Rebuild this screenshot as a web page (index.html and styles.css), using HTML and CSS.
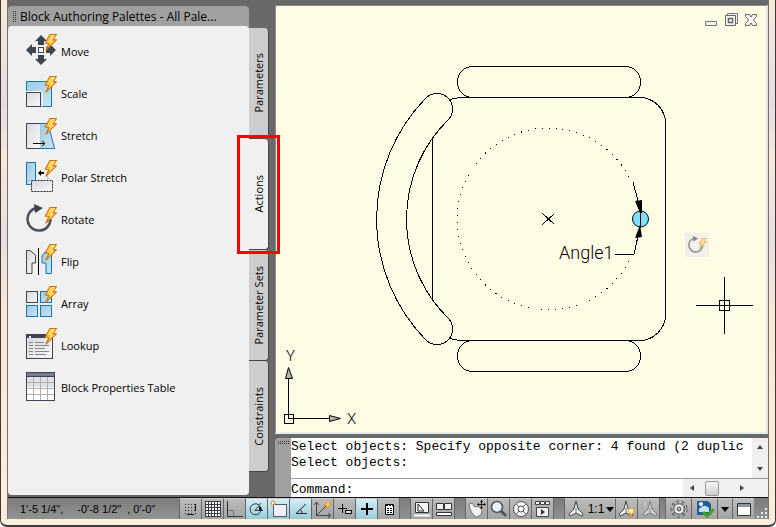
FILE: index.html
```
<!DOCTYPE html>
<html lang="en">
<head>
  <meta charset="UTF-8" />
  <title>Block Editor</title>
  <link rel="stylesheet" href="styles.css">
</head>
<body>

  <!-- shared shapes -->
  <svg class="defs" aria-hidden="true">
    <defs>
      <linearGradient id="blue" x1="0" y1="0" x2="1" y2="1">
        <stop offset="0" stop-color="#9fcbe0" /><stop offset="1" stop-color="#c9e6f2" />
      </linearGradient>
      <linearGradient id="silver" x1="0" y1="0" x2="1" y2="1">
        <stop offset="0" stop-color="#d3d6dc" /><stop offset="1" stop-color="#fafafa" />
      </linearGradient>
      <linearGradient id="gold" x1="0" y1="0" x2="1" y2="0">
        <stop offset="0" stop-color="#ffb81e" /><stop offset="1" stop-color="#fff58c" />
      </linearGradient>
      <symbol id="bolt" viewBox="0 0 12 16">
        <path d="M5.5 .5H11.5L8.5 5.5H11.5L1.5 15.5L4.5 9L1 8.5Z" fill="url(#gold)" stroke="#cf7010" />
      </symbol>
      <symbol id="rotate" viewBox="0 0 30 32">
        <path d="M10 5A11.500 11.500 0 1 0 24.500 16" fill="none" stroke="#4a4f59" stroke-width="2.500" />
        <path d="M8 1L17 5L9 10Z" fill="#3c414b" />
      </symbol>
      <symbol id="compass" viewBox="0 0 16 18">
        <path d="M8 1L10 9L15 14L14 16L8 13L2 16L1 14L6 9Z" fill="#f4f4f4" stroke="#444" />
        <path d="M8 8V13" stroke="#666" />
      </symbol>
    </defs>
  </svg>

  <div class="window">
    <div class="app">

      <div class="main">
        <!-- palette -->
        <div class="palette">
          <div class="palette-title"><span class="grip"></span>Block Authoring Palettes - All Pale...</div>
          <ul class="tools">
            <li><button>
              <svg class="icon" viewBox="0 0 30 32">
                <path d="M15 0L21 6H18V10H12V6H9ZM15 30L21 24H18V20H12V24H9ZM0 15L6 9V12H10V18H6V21ZM30 15L24 9V12H20V18H24V21Z" fill="#3f454f" />
                <rect x="12.500" y="12.500" width="5" height="5" fill="#fff" stroke="#3f454f" />
                <use href="#bolt" x="18" y="-1" width="13" height="17" />
              </svg>Move</button></li>
            <li><button>
              <svg class="icon" viewBox="0 0 30 32">
                <path d="M.5 4.500H25.500V29.500H.5Z" fill="url(#blue)" stroke="#1673b5" />
                <path d="M0 14.500H16V31" fill="none" stroke="#fff" />
                <rect x=".5" y="15.500" width="14" height="14" fill="url(#silver)" stroke="#42434f" />
                <use href="#bolt" x="18" y="-1" width="13" height="17" />
              </svg>Scale</button></li>
            <li><button>
              <svg class="icon" viewBox="0 0 30 32">
                <path d="M14 4.500H22L28.500 29.500H14Z" fill="url(#blue)" stroke="#1673b5" />
                <path d="M14 4.500H.5V29.500H14" fill="url(#silver)" stroke="#42434f" />
                <path d="M14 5V29" stroke="#e6eef2" />
                <path d="M7 24.500H19M16 22L19 24.500L16 27" fill="none" stroke="#000" />
                <use href="#bolt" x="18" y="-1" width="13" height="17" />
              </svg>Stretch</button></li>
            <li><button>
              <svg class="icon" viewBox="0 0 30 32">
                <rect x=".5" y="1.500" width="9" height="22" fill="url(#blue)" stroke="#1673b5" />
                <rect x="5.500" y="19.500" width="21" height="11" fill="url(#silver)" stroke="#222" stroke-dasharray="2 1" />
                <path d="M12 12L15 9V11H18V13H15V15Z" fill="#000" />
                <path d="M20 14Q22 15 22 18" fill="none" stroke="#000" stroke-dasharray="2 2" />
                <use href="#bolt" x="18" y="-1" width="13" height="17" />
              </svg>Polar Stretch</button></li>
            <li><button>
              <svg class="icon" viewBox="0 0 30 32">
                <use href="#rotate" width="30" height="32" />
                <use href="#bolt" x="18" y="4" width="13" height="17" />
              </svg>Rotate</button></li>
            <li><button>
              <svg class="icon" viewBox="0 0 30 32">
                <path d="M.5 5.500H4L9.500 10V18H6V28.500H.5Z" fill="url(#silver)" stroke="#42434f" />
                <path d="M25.500 9.500V28.500H20V18H16V11L20 6Z" fill="url(#blue)" stroke="#1673b5" />
                <path d="M12.500 3V30" stroke="#000" />
                <use href="#bolt" x="18" y="-1" width="13" height="17" />
              </svg>Flip</button></li>
            <li><button>
              <svg class="icon" viewBox="0 0 30 32">
                <rect x=".5" y="4.500" width="11" height="11" fill="url(#silver)" stroke="#42434f" />
                <rect x="14.500" y="4.500" width="11" height="11" fill="url(#blue)" stroke="#1673b5" />
                <rect x=".5" y="18.500" width="11" height="11" fill="url(#blue)" stroke="#1673b5" />
                <rect x="14.500" y="18.500" width="11" height="11" fill="url(#blue)" stroke="#1673b5" />
                <use href="#bolt" x="18" y="-1" width="13" height="17" />
              </svg>Array</button></li>
            <li><button>
              <svg class="icon" viewBox="0 0 30 32">
                <rect x=".5" y="5.500" width="26" height="24" fill="url(#silver)" stroke="#42434f" />
                <path d="M0 5H20V9H0Z" fill="#42434f" /><path d="M3 7H5V9H3Z" fill="#fff" />
                <path d="M3 13.500H7M9 13.500H18M3 16.500H7M9 16.500H23M3 19.500H7M9 19.500H19M3 22.500H7M9 22.500H23M3 25.500H7M9 25.500H20" stroke="#888" />
                <use href="#bolt" x="18" y="-1" width="13" height="17" />
              </svg>Lookup</button></li>
            <li><button>
              <svg class="icon" viewBox="0 0 30 32">
                <rect x=".5" y="1.500" width="28" height="28" fill="#fff" stroke="#42434f" />
                <path d="M1 6H28V16H1Z" fill="#dfe1e8" />
                <path d="M1 2H28V5H1Z" fill="#777e90" />
                <path d="M0 5.500H29" stroke="#42434f" />
                <path d="M1 11.500H28M1 17.500H28M1 23.500H28M7.500 6V29M14.500 6V29M21.500 6V29" stroke="#b0b0b0" />
              </svg>Block Properties Table</button></li>
          </ul>
        </div>

        <div class="tabs" role="tablist">
          <button class="tab" role="tab">Parameters</button>
          <button class="tab active" role="tab" aria-selected="true">Actions</button>
          <button class="tab" role="tab">Parameter Sets</button>
          <button class="tab" role="tab">Constraints</button>
        </div>

        <!-- drawing area and command line -->
        <div class="work">
          <div class="canvas">
            <svg class="drawing" aria-label="Chair block">
              <g transform="translate(-276 -6)">
                <!-- seat and arms -->
                <g class="line">
                  <rect x="457.500" y="66.500" width="183" height="31" rx="15" />
                  <rect x="457.500" y="340.500" width="183" height="31" rx="15" />
                  <path d="M449.500 99.500Q456 97.500 465 97.500H639.500A26 26 0 0 1 665.500 123.500V314.500A26 26 0 0 1 639.500 340.500H465Q456 340.500 449.500 338.500" />
                  <path d="M432.500 138V299" />
                  <path d="M425 99A173 173 0 0 0 425 339A15.500 15.500 0 0 0 449 319A139 139 0 0 1 449 119A15.500 15.500 0 0 0 425 99Z" />
                </g>
                <path class="line dotted" d="M629 261A91 91 0 1 1 629 177" />
                <path class="line" d="M542.500 213.500L554.500 224.500M554.500 213.500L542.500 224.500" />
                <!-- angle parameter -->
                <circle cx="640.500" cy="219" r="8" fill="#7fdfff" stroke="#000" />
                <path class="line" d="M633 182L638 201M640.500 210V228M638 236L634 254.500H615" />
                <path d="M635 201L642 200L642 213H640ZM640 225L642 237L635 238Z" />
                <text class="angle" x="559" y="259">Angle1</text>
                <!-- axes -->
                <path class="line" d="M284.500 414.500H293.500V423.500H284.500ZM288.500 418.500V379M288.500 418.500H329" />
                <path d="M288.500 367.500L292.500 378.500H285.500ZM340.500 418.500L329.500 415.500V421.500Z" fill="#b8b6a8" stroke="#000" />
                <text class="axis" x="286" y="361">Y</text>
                <text class="axis" x="347" y="424">X</text>
                <!-- rotate badge -->
                <rect x="685" y="233" width="24" height="24" fill="#f1f1e9" />
                <g opacity=".6">
                  <use href="#rotate" x="688" y="235" width="18" height="20" />
                  <use href="#bolt" x="698" y="238" width="9" height="11" />
                </g>
                <!-- crosshair -->
                <path class="line" d="M696 305.500H753M724.500 277V334M719.500 300.500H729.500V310.500H719.500Z" />
              </g>
            </svg>
            <div class="window-buttons">
              <button aria-label="Minimize"><svg viewBox="0 0 14 14"><path d="M1.500 8.500H12.500V12.500H1.500Z" fill="#f4f4f0" stroke="#77776f" /></svg></button>
              <button aria-label="Restore"><svg viewBox="0 0 14 14"><path d="M3.500 .5H13.500V10.500H3.500Z" fill="#eee" stroke="#77776f" /><path d="M1.500 2.500H11.500V12.500H1.500Z" fill="#f4f4f0" stroke="#66665f" /><path d="M4.500 5.500H8.500V9.500H4.500Z" fill="#fff" stroke="#66665f" stroke-width="1.500" /></svg></button>
              <button aria-label="Close"><svg viewBox="0 0 14 14"><path d="M1.500 1.500H5.500L7 4L8.500 1.500H12.500V3.500L9.500 7L12.500 10.500V12.500H8.500L7 10L5.500 12.500H1.500V10.500L4.500 7L1.500 3.500Z" fill="#f4f4f0" stroke="#66665f" /></svg></button>
            </div>
          </div>

          <div class="command">
            <div class="command-grip"></div>
            <div class="command-body">
              <div class="history">
                <div class="log">
                  <div>Select objects: Specify opposite corner: 4 found (2 duplic</div>
                  <div>Select objects:</div>
                </div>
                <div class="scroll-v"><span class="up"></span><span class="down"></span></div>
              </div>
              <div class="prompt">
                <label for="cmd">Command:</label>
                <input id="cmd" type="text">
                <div class="scroll-h"><span class="prev"></span><span class="thumb"></span><span class="next"></span></div>
                <div class="corner"></div>
              </div>
            </div>
          </div>
        </div>
      </div>

      <!-- status bar -->
      <div class="status">
        <div class="coords"><span>1'-5 1/4",</span><span>-0'-8 1/2"</span><span>, 0'-0"</span></div>
        <button aria-label="Snap"><svg viewBox="0 0 20 20"><path d="M4 5.500H14M4 8.500H14M4 11.500H14M4 14.500H12" stroke="#333" stroke-dasharray="1 2" /><path d="M14.500 5V12M14.500 14V15M6 15.500H13" stroke="#111" /></svg></button>
        <button aria-label="Grid"><svg viewBox="0 0 20 20"><path d="M2 2H18V18H2Z" fill="#fff" /><path d="M2.500 2V18M5.500 2V18M8.500 2V18M11.500 2V18M14.500 2V18M17.500 2V18M2 2.500H18M2 5.500H18M2 8.500H18M2 11.500H18M2 14.500H18M2 17.500H18" stroke="#3b3b46" /></svg></button>
        <button aria-label="Ortho"><svg viewBox="0 0 20 20"><path d="M2.500 2V17.500H18" fill="none" stroke="#333" /><path d="M3 11.500H8.500V17" fill="none" stroke="#66778a" /></svg></button>
        <button class="on" aria-label="Polar"><svg viewBox="0 0 20 20"><path d="M12 6A5.500 5.500 0 1 0 14 11M8 11.500H16M8 11.500L14 4" fill="none" stroke="#263b48" /><path d="M12 7V11H15L14 8Z" /></svg></button>
        <button class="on" aria-label="Object snap"><svg viewBox="0 0 20 20"><rect x="4.500" y="5.500" width="13" height="12" fill="#eef1f5" stroke="#555a66" /><circle cx="4" cy="4" r="2" fill="#fff" stroke="#e27a16" /></svg></button>
        <button class="on" aria-label="Object tracking"><svg viewBox="0 0 20 20"><path d="M15 5L5 14.500H16M9 10Q11 12 11 14" fill="none" stroke="#1d2933" /></svg></button>
        <button aria-label="Dynamic UCS"><svg viewBox="0 0 20 20"><path d="M3.500 4V16.500H17M3.500 16.500L13 7M1 6L3.500 3L6 6M15 14L18 16.500L15 19" fill="none" stroke="#444" /><use href="#bolt" x="11" y="2" width="7" height="9" /></svg></button>
        <button aria-label="Dynamic input"><svg viewBox="0 0 20 20"><path d="M3 9.500H12M7.500 5V14" stroke="#000" /><path d="M10.500 11.500H16.500V14.500H10.500Z" fill="#ddd" stroke="#000" /></svg></button>
        <button class="on" aria-label="Lineweight"><svg viewBox="0 0 20 20"><path d="M4 10H16M10 4V16" stroke="#000" stroke-width="2" /></svg></button>
        <button aria-label="Quick properties"><svg viewBox="0 0 20 20"><path d="M6.500 5.500H14.500V15.500H6.500Z" fill="#fff" stroke="#000" /><path d="M7 6.500H14M8 9.500H13M8 11.500H13M8 13.500H13" stroke="#000" stroke-dasharray="2 1" /></svg></button>
        <span class="gap"></span>
        <button aria-label="Model"><svg viewBox="0 0 20 20"><path d="M3.500 3.500H16.500V13.500H3.500Z" fill="#f2f2f2" stroke="#333" /><path d="M6 5V12H12Z" fill="#fff" stroke="#222" /><path d="M2 16.500H18" stroke="#fff" stroke-width="2" /></svg></button>
        <button aria-label="Quick view layouts"><svg viewBox="0 0 20 20"><path d="M2.500 4.500H9.500V10.500H2.500ZM10.500 4.500H17.500V10.500H10.500Z" fill="#f2f2f2" stroke="#333" /><path d="M2.500 13.500H17.500V16.500H2.500Z" fill="#fff" stroke="#333" /></svg></button>
        <span class="gap"></span>
        <button aria-label="Pan"><svg viewBox="0 0 20 20"><path d="M2 5L5 4L8 8L11 7L15 11L14 16L9 18L5 14L3 10Z" fill="#f3f3f3" stroke="#777" /><path d="M14.500 2V9M11 5.500H18" stroke="#111" /><path d="M14.500 1L16 3H13ZM14.500 10L16 8H13ZM10 5.500L12 4V7ZM19 5.500L17 4V7Z" /></svg></button>
        <button aria-label="Zoom"><svg viewBox="0 0 20 20"><path d="M11 11L17 17" stroke="#555" stroke-width="3" /><circle cx="8" cy="8" r="5.500" fill="#e8f4fa" stroke="#555" stroke-width="1.500" /></svg></button>
        <button aria-label="Steering wheel"><svg viewBox="0 0 20 20"><circle cx="10" cy="10" r="7.500" fill="#f4f4f4" stroke="#555" /><circle cx="10" cy="10" r="3" fill="#fff" stroke="#555" /><path d="M5 5L8 8M15 5L12 8M5 15L8 12M15 15L12 12" stroke="#666" /></svg></button>
        <button aria-label="Show motion"><svg viewBox="0 0 20 20"><path d="M2.500 2.500H6.500V5.500H2.500ZM7.500 2.500H11.500V5.500H7.500ZM12.500 2.500H16.500V5.500H12.500ZM3.500 8.500H15.500V17.500H3.500Z" fill="#f2f2f2" stroke="#444" /><path d="M8 10V16L12 13Z" fill="#333" /></svg></button>
        <span class="gap"></span>
        <button class="scale"><svg viewBox="0 0 20 20"><use href="#compass" x="2" y="1" width="16" height="18" /></svg>1:1<span class="arrow"></span></button>
        <button aria-label="Annotation visibility"><svg viewBox="0 0 20 20"><use href="#compass" x="1" y="1" width="16" height="18" /><circle cx="14" cy="12" r="3" fill="#fff2b0" stroke="#f09a20" /><path d="M13 16H15V18H13Z" fill="#e28a18" /></svg></button>
        <button aria-label="Auto annotation"><svg class="dim" viewBox="0 0 20 20"><use href="#compass" x="3" y="1" width="16" height="18" /><use href="#bolt" x="2" y="2" width="7" height="9" /></svg></button>
        <span class="gap small"></span>
        <button class="wide" aria-label="Workspace"><svg viewBox="0 0 20 20"><circle cx="10" cy="10" r="7" fill="none" stroke="#444" stroke-width="3" stroke-dasharray="3 2" /><circle cx="10" cy="10" r="7" fill="none" stroke="#f0f0f0" stroke-dasharray="3 2" /><circle cx="10" cy="10" r="5" fill="#f0f0f0" stroke="#777" /><circle cx="10" cy="10" r="2" fill="#bbb" stroke="#444" /></svg></button>
        <button class="wide" aria-label="Drawing status"><svg viewBox="0 0 20 20"><path d="M2 2H13L16 5V16H2Z" fill="#1f5f98" /><path d="M4 10Q9 4 14 9V13H4Z" fill="#c8def0" /><circle cx="6" cy="5" r="2" fill="#fff" /><path d="M8 13L12 17L19 10" fill="none" stroke="#3ca222" stroke-width="3" /></svg></button>
        <button class="menu" aria-label="Status bar menu"><span class="arrow"></span></button>
        <button aria-label="Clean screen"><svg viewBox="0 0 20 20"><path d="M3.500 4.500H16.500V16.500H3.500Z" fill="#fff" stroke="#333" /><path d="M4 5H16V8H4Z" fill="#8b95a2" /></svg></button>
        <svg class="resize" viewBox="0 0 12 12"><path d="M9 1H11V3H9ZM9 5H11V7H9ZM5 5H7V7H5ZM9 9H11V11H9ZM5 9H7V11H5ZM1 9H3V11H1Z" fill="#eee" /></svg>
      </div>

    </div>
  </div>

</body>
</html>
```
FILE: styles.css
```
* {
  box-sizing: border-box;
}

body {
  margin: 0;
  font-family: "Open Sans", "Noto Sans", sans-serif;
  font-size: 11px;
  color: #000;
  background: #fff;
}

button {
  margin: 0;
  padding: 0;
  border: none;
  background: none;
  font: inherit;
  color: inherit;
}

.defs {
  position: absolute;
  width: 0;
  height: 0;
}

/* window frame */
.window {
  display: flex;
  height: 100vh;
  padding: 0 6px 6px;
  border: 1px solid #3c3a38;
  border-top: none;
  border-bottom-width: 2px;
  border-radius: 0 0 7px 7px;
  background: linear-gradient(to bottom, #f7ead8, #e6dbe3 20%, #f8e8da 30%, #e9dddf 45%, #fae8d6 60%, #fbeedd);
}

.app {
  display: flex;
  flex-direction: column;
  flex: 1;
  min-width: 0;
  border: 1px solid #77716c;
  border-width: 0 1px;
}

.main {
  display: flex;
  flex: 1;
  min-height: 0;
  background: #696969;
}

/* palette */
.palette {
  display: flex;
  flex-direction: column;
  width: 241px;
  padding: 6px 0 2px;
}

.palette-title {
  display: flex;
  align-items: center;
  gap: 4px;
  height: 24px;
  margin-bottom: -4px;
  padding: 0 0 3px 4px;
  border-radius: 4px 4px 0 0;
  background: #a0a0a0;
  font-size: 12px;
  white-space: nowrap;
}

.grip {
  width: 4px;
  height: 12px;
  background: repeating-conic-gradient(#333 0 25%, #a0a0a0 0 100%) 0 0 / 2px 2px;
}

.tools {
  flex: 1;
  margin: 0;
  padding: 4px 0 0;
  list-style: none;
  border-radius: 4px;
  background: #f0f0f0;
}

.tools button {
  display: flex;
  align-items: center;
  gap: 5px;
  width: 100%;
  height: 42px;
  padding-left: 18px;
}

.icon {
  width: 30px;
  height: 32px;
  overflow: visible;
}

.tabs {
  display: flex;
  flex-direction: column;
  width: 20px;
  padding-top: 28px;
}

.tab {
  position: relative;
  height: 111px;
  border-right: 1px solid #444;
  border-bottom: 1px solid #444;
  border-radius: 0 4px 4px 0;
  background: #cdcdcd;
  writing-mode: sideways-lr;
  text-align: center;
  line-height: 18px;
}

.tab.active {
  background: #f0f0f0;
}

/* red highlight round the open tab */
.tab.active::after {
  content: '';
  position: absolute;
  inset: -4px -12px -5px;
  border: 3px solid #f00;
  z-index: 1;
}

/* drawing area */
.work {
  display: flex;
  flex-direction: column;
  flex: 1;
  min-width: 0;
  gap: 4px;
  padding: 5px 0 0 6px;
}

.canvas {
  position: relative;
  flex: 1;
  min-height: 0;
  border: 1px solid #8a8a8a;
  border-right: 2px solid #e4e4e4;
  border-bottom: 2px solid #e9efef;
  background: #fffce6;
}

.drawing {
  display: block;
  width: 100%;
  height: 100%;
}

.line {
  fill: none;
  stroke: #000;
  shape-rendering: crispEdges;
}

.dotted {
  stroke-dasharray: 1 6;
}

.angle {
  font: 300 18px Roboto, "Liberation Sans", sans-serif;
}

.axis {
  font: 300 15px Roboto, "Liberation Sans", sans-serif;
}

.window-buttons {
  position: absolute;
  top: 7px;
  right: 8px;
  display: flex;
  gap: 6px;
}

.window-buttons button,
.window-buttons svg {
  display: block;
  width: 14px;
  height: 14px;
}

/* command line */
.command {
  display: flex;
  height: 59px;
  font-family: "Liberation Mono", monospace;
  font-size: 13px;
}

.command-grip {
  width: 16px;
  padding: 3px 2px;
  border-radius: 4px 0 0 0;
  background: #a0a0a0;
}

.command-grip::before {
  content: '';
  display: block;
  height: 4px;
  background: repeating-conic-gradient(#333 0 25%, #a0a0a0 0 100%) 0 0 / 2px 2px;
}

.command-body {
  flex: 1;
  min-width: 0;
  background: #fff;
}

.history {
  display: flex;
  height: 41px;
  border-bottom: 1px solid #999;
}

.log {
  flex: 1;
  min-width: 0;
  overflow: hidden;
  padding-top: 1px;
  line-height: 16px;
  white-space: nowrap;
}

.scroll-v {
  display: flex;
  flex-direction: column;
  align-items: center;
  justify-content: space-between;
  width: 16px;
  padding: 7px 0;
  background: #f0f0f0;
}

.scroll-v span,
.scroll-h .prev,
.scroll-h .next {
  border: 3px solid transparent;
}

.scroll-v .up {
  border-top: none;
  border-bottom: 4px solid #444;
}

.scroll-v .down {
  border-bottom: none;
  border-top: 4px solid #444;
}

.prompt {
  display: flex;
  align-items: stretch;
  height: 18px;
  line-height: 22px;
}

.prompt input {
  flex: 1;
  min-width: 0;
  padding: 0 4px;
  border: none;
  outline: none;
  background: none;
  font: inherit;
}

.scroll-h {
  display: flex;
  align-items: center;
  justify-content: space-between;
  width: 68px;
  padding: 0 7px;
  background: #efefef;
}

.scroll-h .prev {
  border-left: none;
  border-right: 4px solid #444;
}

.scroll-h .next {
  border-right: none;
  border-left: 4px solid #444;
}

.thumb {
  width: 14px;
  height: 15px;
  margin-right: 10px;
  border: 1px solid #999;
  border-radius: 2px;
  background: linear-gradient(#f5f5f5, #cfcfcf);
}

.corner {
  width: 17px;
  background: #f0f0f0;
}

/* status bar */
.status {
  display: flex;
  height: 22px;
  border-top: 1px solid #111;
  background: linear-gradient(#7b7b7b, #929292);
}

.coords {
  display: flex;
  flex: 1;
  align-items: center;
  gap: 14px;
  min-width: 0;
  padding-left: 12px;
  background: linear-gradient(#7d7d7d, #929292);
  font-family: "Liberation Sans", sans-serif;
  font-size: 11px;
  white-space: nowrap;
}

.coords span:last-child {
  margin-left: -8px;
}

.status button {
  display: flex;
  align-items: center;
  justify-content: center;
  width: 22px;
  border-left: 1px solid #666;
  border-top: 1px solid #ccc;
  background: linear-gradient(#bcbcbc, #a3a3a3);
  font-family: "Liberation Sans", sans-serif;
  font-size: 12px;
}

.status button.on {
  background: linear-gradient(#d4eef5, #9acbdb);
}

.status button svg {
  width: 20px;
  height: 20px;
  flex: none;
}

.status .scale {
  width: 51px;
  gap: 2px;
}

.status .wide {
  width: 26px;
}

.status .menu {
  width: 15px;
}

.status .dim {
  filter: grayscale(1);
  opacity: .5;
}

.gap {
  width: 11px;
  border-left: 1px solid #666;
}

.gap.small {
  width: 6px;
}

.arrow {
  border: 4px solid transparent;
  border-top: 5px solid #000;
  border-bottom: none;
}

.resize {
  align-self: flex-end;
  width: 12px;
  height: 12px;
  margin-left: 2px;
}
```
